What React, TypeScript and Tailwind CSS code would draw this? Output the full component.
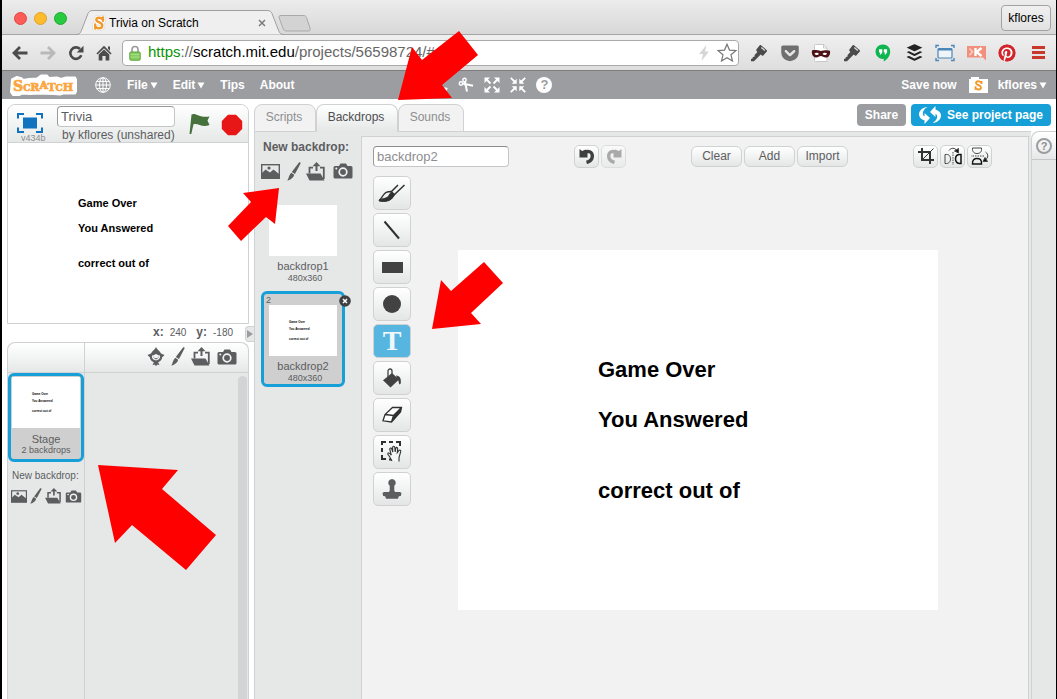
import React from 'react';
import { FaBuffer, FaGetPocket, FaPinterest } from 'react-icons/fa';

type IconProps = { className?: string };

/* ---------- browser icons ---------- */

const BackIcon = ({ className }: IconProps) => (
  <svg viewBox="0 0 16 14" className={className} aria-hidden="true">
    <path d="M8 1 2 7l6 6M2.500 7H15.500" fill="none" stroke="currentColor" strokeWidth="2.800" />
  </svg>
);

const ReloadIcon = () => (
  <svg viewBox="0 0 16 16" className="size-4" aria-hidden="true">
    <path d="M13.300 10.300A5.700 5.700 0 1 1 12 4" fill="none" stroke="#4b4b4b" strokeWidth="2.600" />
    <path d="M15.500 .7v6.800H8.700z" fill="#4b4b4b" />
  </svg>
);

const HomeIcon = () => (
  <svg viewBox="0 0 16 16" className="size-4" aria-hidden="true">
    <path d="M8 .8 15.600 8.400 14.500 9.500 8 3.200 1.500 9.500.4 8.400zM12 1.500h2v4.200l-2-2z" fill="#4b4b4b" />
    <path d="M8 4.500 13.300 9.500V15.500H9.600V11H6.400v4.500H2.700V9.500z" fill="#4b4b4b" />
  </svg>
);

const LockIcon = () => (
  <svg viewBox="0 0 12 16" className="h-4 w-3 shrink-0" aria-hidden="true">
    <path d="M3 8V4.500a3 3 0 0 1 6 0V8" fill="none" stroke="#9a9a9a" strokeWidth="1.600" />
    <rect x=".8" y="7" width="10.400" height="8.200" rx="1" fill="#86cc60" stroke="#5ba33b" />
    <path d="M1.500 9.500h9M1.500 12h9" stroke="#a6e085" />
  </svg>
);

const KeyIcon = () => (
  <svg viewBox="0 0 18 18" className="size-[18px]" aria-hidden="true">
    <path d="M11 1.200 16.800 6.200a1 1 0 0 1 0 1.300l-3.500 4a1 1 0 0 1-1.300.1L10.700 10.600 4 17.200H1V15l1.600-.4.200-1.700 1.700-.2.100-1.600 2.800-3.200L6.400 6.700a1 1 0 0 1 0-1.300l3.300-4.100a1 1 0 0 1 1.300-.1z" fill="#4a4a4a" />
    <path d="m11.300 3.400 3.500 3" stroke="#e0e0e0" strokeWidth="1.300" />
  </svg>
);

const MaskIcon = () => (
  <svg viewBox="0 0 20 18" className="h-[18px] w-5" aria-hidden="true">
    <path d="M4.500.5h8l3.500 3.500v13.500H4.500a1 1 0 0 1-1-1v-15a1 1 0 0 1 1-1z" fill="#fff" stroke="#c8c8c8" />
    <path d="M12.500.5V4H16" fill="none" stroke="#c8c8c8" />
    <path d="M1 6.500c3-1 6 0 8.500.4C12 6.500 16 5.500 19 6.700 19.500 10.500 18 13.500 15 13.500c-2.500 0-3.500-1.500-5.200-1.500S7 13.800 4.800 13.500C1.800 13 .3 10 1 6.500z" fill="#4d1218" />
    <path d="M3.500 9.800c1-1.500 3.500-1.300 4.500.3-1.200 1.400-3.500 1.400-4.500-.3zM11.500 10.100c1-1.600 3.500-1.800 4.600-.3-1 1.700-3.400 1.700-4.600.3z" fill="#fff" />
  </svg>
);

const HangoutsIcon = () => (
  <svg viewBox="0 0 16 18" className="h-[18px] w-4" aria-hidden="true">
    <path d="M8 .5a7 7 0 0 1 7.200 7.200C15.200 12 12 15.500 8.800 17.500v-2.700A7.200 7.200 0 1 1 8 .5z" fill="#0fb54e" />
    <path d="M4 5.200h3.300v3.400L5.800 10.500H4.600L5.300 8.600H4zM8.800 5.200h3.300v3.400l-1.500 1.900H9.400l.7-1.900H8.800z" fill="#fff" />
  </svg>
);

const CaptureIcon = () => (
  <svg viewBox="0 0 20 18" className="h-[18px] w-5" aria-hidden="true">
    <path d="M1 4V1.500h3M16 1.500h3V4M19 14v2.500h-3M4 16.500H1V14" fill="none" stroke="#4a86b8" strokeWidth="1.400" />
    <rect x="3" y="4.500" width="14" height="9.500" rx="1" fill="#eef4f8" stroke="#4a86b8" strokeWidth="1.200" />
    <path d="M3 5.500h14" stroke="#4a86b8" strokeWidth="2" />
  </svg>
);

const KloutIcon = () => (
  <svg viewBox="0 0 19 16" className="h-4 w-[19px]" aria-hidden="true">
    <path d="M0 1h19v14.500L16 12.500H0z" fill="#f1907c" />
    <path d="M8.500 3v8M14.500 3 9.500 7l5 4" fill="none" stroke="#fff" strokeWidth="2.400" />
    <path d="m2.500 3.500 3 3.300-3 3.400" fill="none" stroke="#fbd0c6" strokeWidth="1.600" />
  </svg>
);

/* ---------- editor icons ---------- */

const GlobeIcon = () => (
  <svg viewBox="0 0 16 16" className="size-4" fill="none" stroke="#fff" aria-hidden="true">
    <circle cx="8" cy="8" r="7.300" />
    <ellipse cx="8" cy="8" rx="3.500" ry="7.300" />
    <path d="M8 .7v14.600M.7 8h14.600M1.700 4.400h12.600M1.700 11.600h12.600" />
  </svg>
);

const Wordmark = () => (
  <svg viewBox="0 0 68 24" className="h-6 w-[68px]" role="img" aria-label="Scratch">
    <path d="M3 6.500 8 4l5 1.500 1 1.500 6-1 8-.5 4-3h6l2 2.500 8-.5 4 1.500 5-1.500h9l1.500 3-.5 4 .5 6-1.500 3H54l-3 1-6-.5-16-.5-8 .5-8-.5-3 1.500H4L2 19z" fill="#fff" stroke="#fff" strokeWidth="2" strokeLinejoin="round" />
    <text x="4" y="18" fontFamily="'DejaVu Serif', serif" fontWeight="700" fontSize="11" fill="#f9a540" stroke="#f9a540" strokeWidth="0.7">
      <tspan fontSize="14">S</tspan>
      <tspan fontSize="9">C</tspan>
      <tspan>R</tspan>
      <tspan dy="-2">A</tspan>
      <tspan dy="2">T</tspan>
      <tspan fontSize="9">C</tspan>
      <tspan>H</tspan>
    </text>
  </svg>
);

const SLetter = ({ className }: IconProps) => (
  <svg viewBox="0 0 14 16" className={className} aria-hidden="true">
    <g fill="none" strokeLinecap="round">
      <path d="M11 3v3M11 4.800C10 2.500 4.500 1.800 4.300 4.700 4.200 7.500 10.500 7 10.300 10.800 10 14.300 4 13.800 3.300 11M3.200 9.500v4" stroke="#d6d6d6" strokeWidth="5.600" />
      <path d="M11 3v3M11 4.800C10 2.500 4.500 1.800 4.300 4.700 4.200 7.500 10.500 7 10.300 10.800 10 14.300 4 13.800 3.300 11M3.200 9.500v4" stroke="#fff" strokeWidth="4.600" />
      <path d="M11 2.500v3.300M11 4.800C10 2.500 4.500 1.800 4.300 4.700 4.200 7.500 10.500 7 10.300 10.800 10 14.300 4 13.800 3.300 11M3.200 9.500v4" stroke="#f29a2e" strokeWidth="2.400" />
    </g>
  </svg>
);

const FolderIcon = () => (
  <svg viewBox="0 0 19 18" className="h-[18px] w-[19px]" aria-hidden="true">
    <path d="M0 3h2V1h8v2h9v14H0z" fill="#fff" />
    <path d="M12.500 5v3M12.500 7C11.500 5 7 4.500 7 7c0 2.300 5 1.700 5 4.500 0 2.700-4.500 2.500-5.500.3M6.500 10.300v3.500" fill="none" stroke="#f29a2e" strokeWidth="1.900" />
  </svg>
);

const ScissorsIcon = () => (
  <svg viewBox="0 0 16 16" className="size-4" fill="none" stroke="#fff" aria-hidden="true">
    <circle cx="6.500" cy="3" r="1.700" strokeWidth="1.400" />
    <circle cx="3" cy="6.500" r="1.700" strokeWidth="1.400" />
    <path d="M7 4.600 9 14.500M4.700 6.600 15 8.700M6.500 7.500 9 8" strokeWidth="2" />
  </svg>
);

const GrowIcon = () => (
  <svg viewBox="0 0 16 16" className="size-4" aria-hidden="true">
    <path d="m2 2 4.500 4.500M14 2 9.500 6.500M2 14l4.500-4.500M14 14 9.500 9.500" stroke="#fff" strokeWidth="1.800" />
    <path d="M.5.500H6L.500 6zM15.500.500V6L10 .5zM.5 15.500V10L6 15.500zM15.500 15.500H10L15.500 10z" fill="#fff" />
  </svg>
);

const ShrinkIcon = () => (
  <svg viewBox="0 0 16 16" className="size-4" aria-hidden="true">
    <path d="M.800.800 5 5M15.200.800 11 5M.8 15.200 5 11M15.200 15.200 11 11" stroke="#fff" strokeWidth="1.800" />
    <path d="M6.700 6.700H1.700L6.700 1.700zM9.300 6.700V1.700L14.300 6.700zM6.700 9.300v5L1.700 9.300zM9.300 9.300h5L9.300 14.300z" fill="#fff" />
  </svg>
);

const StampIcon = ({ className }: IconProps) => (
  <svg viewBox="0 0 20 20" className={className} fill="currentColor" aria-hidden="true">
    <path d="M10 0a3.800 3.800 0 0 1 2.300 6.800V12l1 1H18l1.500 1-.7 3-2 .2-.8 2.600H4l-.8-2.600-2-.2-.7-3L2 13h4.700l1-1V6.800A3.800 3.800 0 0 1 10 0z" />
  </svg>
);

const SwirlIcon = () => (
  <svg viewBox="0 0 24 20" className="h-5 w-6" fill="#fff" aria-hidden="true">
    <path d="M9.500 2C3 2.500-1 8 2 12.500c1 1.500 2.800 2.500 4.500 2.800V19l5.500-6-5.500-5v3.300C3.500 10 4.500 4.500 9.500 2z" />
    <path d="M14.500 18C21 17.500 25 12 22 7.500 21 6 19.200 5 17.500 4.700V1L12 7l5.500 5V8.700C20.500 10 19.500 15.500 14.500 18z" />
  </svg>
);

const PictureIcon = ({ className }: IconProps) => (
  <svg viewBox="0 0 19 15" className={className} aria-hidden="true">
    <rect x=".7" y=".7" width="17.600" height="13.600" fill="none" stroke="#5c5d5f" strokeWidth="1.400" />
    <path d="M1 14V9l3.500-3.500L9 8.500l3.500-3L18 10v4z" fill="#5c5d5f" />
    <circle cx="8" cy="4" r="1.600" fill="#5c5d5f" />
  </svg>
);

const BrushIcon = ({ className }: IconProps) => (
  <svg viewBox="0 0 14 19" className={className} fill="#5c5d5f" aria-hidden="true">
    <path d="M12 .4c1-.6 2 .2 1.500 1.200L8 12 4.800 10z" />
    <path d="M4.300 10.800 7.200 12.700C6.700 15.500 4 17.500.3 18.700 1.800 16.500 2 12.500 4.300 10.800z" />
  </svg>
);

const UploadIcon = ({ className }: IconProps) => (
  <svg viewBox="0 0 20 19" className={className} aria-hidden="true">
    <path d="M0 11.500h14.500L18.500 18.500H3.500z" fill="#5c5d5f" />
    <path d="M3.500 11.500V5.700H7M14 5.700h3.800V17" fill="none" stroke="#5c5d5f" strokeWidth="1.800" />
    <path d="M10.500 9V3" stroke="#5c5d5f" strokeWidth="2" />
    <path d="m10.500 0 4 4.300h-8z" fill="#5c5d5f" />
  </svg>
);

const CameraIcon = ({ className }: IconProps) => (
  <svg viewBox="0 0 20 16" className={className} aria-hidden="true">
    <path d="M2 3h4l1.500-2.500h5.500L14.500 3H18a1.500 1.500 0 0 1 1.500 1.500v9.500a1.500 1.500 0 0 1-1.500 1.500H2A1.500 1.500 0 0 1 .5 14V4.500A1.500 1.500 0 0 1 2 3z" fill="#5c5d5f" />
    <circle cx="10" cy="9" r="3.800" fill="none" stroke="#f0f1f1" strokeWidth="1.700" />
    <circle cx="3.300" cy="5.600" r="1" fill="#f0f1f1" />
  </svg>
);

const SpriteIcon = () => (
  <svg viewBox="0 0 18 19" className="h-[19px] w-[18px]" aria-hidden="true">
    <path d="M9 0c.8 2.500 4 4 5 6.500L17.500 8 15 10.500c0 2.500-2 4-3.800 4.800l1.300 3-2-.8L9 19l-1.500-1.500-2 .8 1.300-3C5 14.500 3 13 3 10.500L.5 8 4 6.500C5 4 8.200 2.500 9 0z" fill="#5c5d5f" />
    <path d="M5 8.500c2.500 0 3-1.500 4-1.500s1.500 1.500 4 1.500c.5 3-1.500 4.800-4 4.800S4.500 11.500 5 8.500z" fill="#f3f4f4" />
    <path d="M6.800 9.800v.7M11.200 9.800v.7M7.500 11.700h3" stroke="#5c5d5f" />
  </svg>
);

const CanvasBrushIcon = () => (
  <svg viewBox="0 0 28 20" className="h-5 w-7" fill="none" stroke="#303030" aria-hidden="true">
    <path d="M20 2 13 9M26.500 2 16.500 11.500" strokeWidth="1.500" />
    <path d="M13 8.500c-3.500 0-6 .5-7.500 3.500L1.500 17.500c5 .7 10 .8 12.500-2.800l2.500-3.200z" strokeWidth="1.300" />
    <path d="M1.500 18c5 .7 10 .5 12.800-3l2.200-3.500-3-2.500-2.500 3c0 2.300-4.500 3.800-9.500 4.500z" fill="#303030" />
  </svg>
);

const BucketIcon = () => (
  <svg viewBox="0 0 20 20" className="size-5" aria-hidden="true">
    <path d="M10 5 17 11.500 8.500 19.500 1 12.300z" fill="#424242" />
    <path d="M6 9V3a2 2 0 0 1 4 0v4" fill="none" stroke="#424242" strokeWidth="1.300" />
    <path d="M14 7.500c4 .2 5.300 3 4.800 8l-1.600 1c-.3-2-.5-4-2-5.500z" fill="#424242" />
  </svg>
);

const EraserIcon = () => (
  <svg viewBox="0 0 22 18" className="h-[18px] w-[22px]" aria-hidden="true">
    <path d="M11.500 1.500h9l-1 4.500L10.500 16 2 14.800 4 8.500z" fill="#fff" />
    <path d="M20.500 1.500 12.500 9.500l-2 6.500L19.500 6z" fill="#303030" />
    <path d="M11.500 1.500h9l-1 4.500L10.500 16 2 14.800 4 8.500zM4 8.500l8.500 1L20.500 1.500M12.500 9.500 10.500 16" fill="none" stroke="#303030" strokeWidth="1.300" />
  </svg>
);

const SelectIcon = () => (
  <svg viewBox="0 0 24 24" className="size-6" fill="none" stroke="#303030" aria-hidden="true">
    <path d="M2 5V2h4M9 2h4M16 2h4v4M2 8v4M2 15v4h4M9 19.500h3" strokeWidth="2" />
    <path d="m12 21-2.500-4.500L8 14.500c-.7-1.500 1-2 1.800-1l1.500 1.700-1.500-5.700c-.3-1.600 1.600-2 2-.5l1 3-.2-4.500c0-1.600 2-1.600 2.200 0l.4 4.500.6-3.600c.3-1.500 2-1.200 1.900.3l-.4 4 1.500-2c.9-1.300 2.400-.5 1.900.9L19 17.500V21.500" fill="#f4f5f5" strokeWidth="1.100" />
  </svg>
);

const UndoIcon = ({ className }: IconProps) => (
  <svg viewBox="0 0 16 16" className={className} aria-hidden="true">
    <path d="M4 5.500 6 4.500C9 2.500 13 3.500 13.300 7.500 13.500 11 11 13.500 7.500 14.500" fill="none" stroke="currentColor" strokeWidth="3.400" />
    <path d="M.5 1 3 3 7 1.500 8.500 5.500V9.500H.5z" fill="currentColor" />
  </svg>
);

const CropIcon = () => (
  <svg viewBox="0 0 16 16" className="size-4" fill="none" stroke="#333" aria-hidden="true">
    <path d="M4 0v12h12M0 4h12v12" strokeWidth="2" />
    <path d="m4 12 11.500-11.500" />
  </svg>
);

const FlipIcon = ({ className }: IconProps) => (
  <svg viewBox="0 0 18 18" className={className} fill="none" stroke="#444" aria-hidden="true">
    <path d="M9 5v13" strokeDasharray="1.500 1" />
    <path d="M1 7.500c4.500-.5 5.500 2 5.500 4.500S5 17 1 16.500z" />
    <path d="M17 7.500c-4.500-.5-5.500 2-5.500 4.500s1.500 5 5.500 4.500z" stroke="#111" strokeWidth="1.500" />
    <path d="M5 3.500C7 .5 11 .5 12.500 3.500" />
    <path d="M10.500 4 14.500 1.500 14.500 6z" fill="#111" />
  </svg>
);

/* ---------- shared pieces ---------- */

const MENU_ITEM = 'flex items-center gap-[2px] font-bold text-white';
const RAISED = 'flex items-center justify-center border border-[#cfd1d2] bg-linear-to-b from-white to-[#e4e6e6]';

const Caret = () => (
  <svg viewBox="0 0 8 7" className="h-[7px] w-2" aria-hidden="true">
    <path d="M.5.500h7L4 6.500z" fill="#fff" />
  </svg>
);

const Thumbnail = ({ blank = false }: { blank?: boolean }) => (
  <span className="block h-[51px] w-[68px] bg-white pt-[15px] pl-5 text-left text-[3px] leading-[4px] font-bold text-black">
    {!blank && (
      <>
        <span className="block">Game Over</span>
        <span className="mt-[3px] block">You Answered</span>
        <span className="mt-[6px] block">correct out of</span>
      </>
    )}
  </span>
);

const paintTools: { name: string; icon: React.ReactNode }[] = [
  { name: 'Brush', icon: <CanvasBrushIcon /> },
  {
    name: 'Line',
    icon: (
      <svg viewBox="0 0 18 20" className="h-5 w-[18px]" aria-hidden="true">
        <path d="m1.500 1.500 14.500 17" stroke="#303030" strokeWidth="2" />
      </svg>
    ),
  },
  { name: 'Rectangle', icon: <span className="h-[11px] w-[21px] bg-[#424242]" /> },
  { name: 'Ellipse', icon: <span className="size-[18px] rounded-full bg-[#424242]" /> },
  {
    name: 'Text',
    icon: <span className="font-['Liberation_Serif',serif] text-[28px] leading-7 font-bold text-[#f0f7fb]">T</span>,
  },
  { name: 'Fill', icon: <BucketIcon /> },
  { name: 'Eraser', icon: <EraserIcon /> },
  { name: 'Select', icon: <SelectIcon /> },
  { name: 'Stamp', icon: <StampIcon className="size-5 text-[#5c5d5f]" /> },
];

/* ---------- browser chrome ---------- */

const TabStrip = () => (
  <div className="flex h-[34px] items-start bg-linear-to-b from-[#ececec] to-[#d8d8d8] pl-3">
    <div className="flex gap-[7px] pt-3">
      <button aria-label="Close" className="size-[13px] rounded-full border border-[#e2463f] bg-[#fc5b57]" />
      <button aria-label="Minimize" className="size-[13px] rounded-full border border-[#e0a02a] bg-[#fdbc2e]" />
      <button aria-label="Zoom" className="size-[13px] rounded-full border border-[#1fa930] bg-[#28ca40]" />
    </div>
    <div className="relative z-10 mt-[10px] ml-[9px] flex h-[25px] w-[208px] items-center">
      <svg viewBox="0 0 208 25" className="absolute inset-0" aria-hidden="true">
        <path d="M0 24.500c3 0 4-1 5-3L12 3.500C13 1.500 14 .5 17 .5h174c3 0 4 1 5 3l7 18c1 2 2 3 5 3" fill="#efefef" stroke="#9f9f9f" />
      </svg>
      <SLetter className="relative ml-4 h-4 w-[14px]" />
      <span className="relative ml-[3px] text-xs text-black">Trivia on Scratch</span>
      <button aria-label="Close tab" className="relative mr-[18px] ml-auto">
        <svg viewBox="0 0 8 8" className="size-2" aria-hidden="true">
          <path d="m1 1 6 6M7 1 1 7" stroke="#7b7b7b" strokeWidth="1.500" />
        </svg>
      </button>
    </div>
    <button aria-label="New tab" className="mt-[15px] -ml-[6px]">
      <svg viewBox="0 0 33 17" className="h-[17px] w-[33px]" aria-hidden="true">
        <path d="M3 .5h22c2 0 3 .5 3.500 2L32 13c.6 2 0 3-2 3H9c-2 0-3-.5-3.700-2L1.200 3C.6 1.500 1 .5 3 .5z" fill="#d3d3d3" stroke="#a9a9a9" />
      </svg>
    </button>
    <button className="mt-[5px] mr-[5px] ml-auto h-[26px] w-[50px] rounded border border-[#a3a3a3] bg-linear-to-b from-[#f0f0f0] to-[#e2e2e2] text-xs text-black">
      kflores
    </button>
  </div>
);

const AddressRow = () => (
  <div className="flex h-[37px] items-center border-t border-b border-t-[#a5a5a5] border-b-[#7d7d7d] bg-linear-to-b from-[#efefef] to-[#dedede] pr-[7px] pl-[10px]">
    <nav className="flex items-center gap-3">
      <button aria-label="Back"><BackIcon className="h-[14px] w-4 text-[#4b4b4b]" /></button>
      <button aria-label="Forward" className="rotate-180"><BackIcon className="h-[14px] w-4 text-[#b9b9b9]" /></button>
      <button aria-label="Reload"><ReloadIcon /></button>
      <button aria-label="Home"><HomeIcon /></button>
    </nav>
    <div className="mr-[9px] ml-[10px] flex h-[26px] flex-1 items-center rounded border border-[#a9a9a9] bg-white pr-px pl-[6px]">
      <LockIcon />
      <span className="ml-[7px] flex-1 text-[15px] whitespace-nowrap text-[#666]">
        <span className="text-[#0a9404]">https</span>://<span className="text-black">scratch.mit.edu</span>/projects/56598724/#e
      </span>
      <svg viewBox="0 0 10 16" className="h-4 w-[10px]" aria-hidden="true">
        <path d="M7.500 0 0 9h4l-1.500 7L10 6.500H6z" fill="#d6d6d6" />
      </svg>
      <button aria-label="Bookmark" className="ml-2">
        <svg viewBox="0 0 20 19" className="h-[19px] w-5" aria-hidden="true">
          <path d="m10 1.200 2.500 5.900 6.400.5-4.900 4.200 1.500 6.200L10 14.700 4.500 18 6 11.800 1.100 7.600l6.400-.5z" fill="#fff" stroke="#777" strokeWidth="1.200" />
        </svg>
      </button>
    </div>
    <div className="flex gap-[9px]">
      {[
        { name: 'Password', icon: <KeyIcon /> },
        { name: 'Pocket', icon: <FaGetPocket className="size-5 text-[#6f6f6f]" /> },
        { name: 'Mask', icon: <MaskIcon /> },
        { name: 'Key', icon: <KeyIcon /> },
        { name: 'Hangouts', icon: <HangoutsIcon /> },
        { name: 'Buffer', icon: <FaBuffer className="size-[19px] text-[#222]" /> },
        { name: 'Capture', icon: <CaptureIcon /> },
        { name: 'Klout', icon: <KloutIcon /> },
        { name: 'Pinterest', icon: <FaPinterest className="size-[18px] rounded-full bg-white text-[#d2252b]" /> },
      ].map((item) => (
        <button key={item.name} aria-label={item.name} className="flex w-[22px] items-center justify-center">
          {item.icon}
        </button>
      ))}
      <button aria-label="Menu" className="flex w-[22px] flex-col items-center justify-center gap-[2px]">
        <span className="h-[3px] w-[13px] bg-[#c9392b]" />
        <span className="h-[3px] w-[13px] bg-[#c9392b]" />
        <span className="h-[3px] w-[13px] bg-[#c9392b]" />
      </button>
    </div>
  </div>
);

/* ---------- editor ---------- */

const MenuBar = () => (
  <header className="flex h-7 items-center bg-[#9c9da1] pr-[9px] pl-[7px] text-xs">
    <Wordmark />
    <button aria-label="Language" className="ml-[18px]"><GlobeIcon /></button>
    <nav className="ml-4 flex gap-[15px]">
      <button className={MENU_ITEM}>File<Caret /></button>
      <button className={MENU_ITEM}>Edit<Caret /></button>
      <a href="#tips" className={MENU_ITEM}>Tips</a>
      <a href="#about" className={MENU_ITEM}>About</a>
    </nav>
    <div className="ml-[138px] flex items-center gap-[10px]">
      <button aria-label="Duplicate"><StampIcon className="size-4 text-white" /></button>
      <button aria-label="Delete"><ScissorsIcon /></button>
      <button aria-label="Grow"><GrowIcon /></button>
      <button aria-label="Shrink"><ShrinkIcon /></button>
      <button aria-label="Block help" className="flex size-4 items-center justify-center rounded-full bg-white text-[13px] leading-4 font-bold text-[#9c9da1]">?</button>
    </div>
    <div className="ml-auto flex items-center">
      <button className={MENU_ITEM}>Save now</button>
      <button aria-label="My stuff" className="mr-[10px] ml-3 flex"><FolderIcon /></button>
      <button className={MENU_ITEM}>kflores<Caret /></button>
    </div>
  </header>
);

const StagePanel = () => (
  <section className="mt-[5px] rounded-t-lg border border-[#d0d1d2]">
    <div className="flex h-[38px] items-start rounded-t-lg border-b border-[#d0d1d2] bg-linear-to-b from-white to-[#e6e8e8] pl-[9px]">
      <div className="mt-2 flex w-[30px] flex-col">
        <button aria-label="Full screen">
          <svg viewBox="0 0 26 20" className="h-5 w-[26px]" aria-hidden="true">
            <path d="M1 5.500V1h6M19 1h6v4.500M25 14.500V19h-6M7 19H1v-4.500" fill="none" stroke="#1173c0" strokeWidth="2" />
            <rect x="6" y="4.500" width="14" height="11" fill="#1173c0" />
          </svg>
        </button>
        <span className="pl-1 text-[9px] leading-[10px] text-[#8c8d90]">v434b</span>
      </div>
      <div className="mt-px ml-[10px]">
        <input
          aria-label="Project title"
          defaultValue="Trivia"
          className="block h-[21px] w-[118px] rounded border border-[#c5c6c8] border-t-[#9a9b9d] border-l-[#9a9b9d] bg-white px-[3px] text-[13px] text-[#5c5d5f]"
        />
        <p className="ml-[5px] text-xs leading-4 whitespace-nowrap text-[#5c5d5f]">by kflores (unshared)</p>
      </div>
      <button aria-label="Green flag" className="mt-2 ml-[14px]">
        <svg viewBox="0 0 21 22" className="h-[22px] w-[21px]" fill="#47713c" aria-hidden="true">
          <path d="M2.500 1.500c4-2.500 7.500 3.500 18 2l-2 4 2 4.500c-8 3-11.500-2.500-16-.7L2.300 21H.5z" />
        </svg>
      </button>
      <button aria-label="Stop" className="mt-[9px] ml-[11px]">
        <svg viewBox="0 0 22 22" className="size-[22px]" aria-hidden="true">
          <path d="M7 .8h8L21.200 7v8L15 21.200H7L.800 15V7z" fill="#e81717" />
        </svg>
      </button>
    </div>
    <div className="h-[180px] bg-white pt-[54px] pl-[70px] text-[11px] leading-3 font-bold text-black">
      <p>Game Over</p>
      <p className="mt-[13px]">You Answered</p>
      <p className="mt-[23px]">correct out of</p>
    </div>
  </section>
);

const SpritePanel = () => (
  <section className="flex flex-1 flex-col rounded-t-lg border border-b-0 border-[#d0d1d2] bg-[#e6e8e8]">
    <div className="flex h-[30px] rounded-t-lg border-b border-[#d0d1d2] bg-linear-to-b from-white to-[#e6e8e8]">
      <div className="w-[77px] border-r border-[#d0d1d2]" />
      <div className="flex flex-1 items-center justify-end gap-[6px] pr-[11px] pb-[3px]">
        <button aria-label="Choose sprite"><SpriteIcon /></button>
        <button aria-label="Paint sprite"><BrushIcon className="h-[19px] w-[14px]" /></button>
        <button aria-label="Upload sprite"><UploadIcon className="h-[19px] w-5" /></button>
        <button aria-label="Sprite from camera" className="pt-px"><CameraIcon className="h-4 w-5" /></button>
      </div>
    </div>
    <div className="flex flex-1">
      <div className="w-[77px] border-r border-[#d0d1d2]">
        <button className="flex h-[89px] w-[76px] flex-col items-center rounded-md border-[3px] border-[#179fd7] bg-[#cfcfcf] pt-px text-[#5c5d5f]">
          <Thumbnail />
          <span className="mt-[5px] text-[11px] leading-3">Stage</span>
          <span className="text-[9px] leading-[11px]">2 backdrops</span>
        </button>
        <p className="mt-[7px] pl-1 text-[10px] leading-[14px] whitespace-nowrap text-[#5c5d5f]">New backdrop:</p>
        <div className="mt-[5px] flex items-center gap-[3px] pl-[3px]">
          <button aria-label="Backdrop from library"><PictureIcon className="h-[13px] w-4" /></button>
          <button aria-label="Paint backdrop"><BrushIcon className="h-4 w-3" /></button>
          <button aria-label="Upload backdrop"><UploadIcon className="h-4 w-[17px]" /></button>
          <button aria-label="Backdrop from camera"><CameraIcon className="h-[13px] w-[17px]" /></button>
        </div>
      </div>
      <div className="mt-[3px] mr-px ml-auto w-[9px] rounded-t-full bg-[#d3d4d6]" />
    </div>
  </section>
);

const TABS = [
  { label: 'Scripts', style: 'w-[62px] bg-[#f2f2f2] text-[#8d8e91]' },
  { label: 'Backdrops', style: 'w-[82px] bg-linear-to-b from-white to-[#e6e8e8] border-b-[#e6e8e8] text-[#4d4e50]' },
  { label: 'Sounds', style: 'w-[66px] bg-[#f2f2f2] text-[#8d8e91]' },
];

const BackdropList = () => (
  <aside className="w-[106px] pt-2 pl-[6px] text-[#5c5d5f]">
    <h2 className="pl-[2px] text-xs leading-[14px] font-bold">New backdrop:</h2>
    <div className="mt-[7px] flex h-5 items-center">
      <button aria-label="Choose backdrop from library"><PictureIcon className="h-[15px] w-[19px]" /></button>
      <button aria-label="Paint new backdrop" className="ml-[7px]"><BrushIcon className="h-[19px] w-[14px]" /></button>
      <button aria-label="Upload backdrop from file" className="ml-[5px]"><UploadIcon className="h-[19px] w-5" /></button>
      <button aria-label="New backdrop from camera" className="ml-[7px]"><CameraIcon className="h-4 w-5" /></button>
    </div>
    <div className="mt-[10px] flex w-[84px] flex-col gap-1">
      <button className="flex h-24 flex-col items-center border-[3px] border-transparent pt-[11px]">
        <Thumbnail blank />
        <span className="mt-[3px] text-[11px] leading-[14px]">backdrop1</span>
        <span className="pl-1 text-[9px] leading-[11px]">480x360</span>
      </button>
      <div className="relative">
        <button className="flex h-24 w-full flex-col items-center rounded-md border-[3px] border-[#179fd7] bg-[#cfcfcf]">
          <span className="h-[11px] self-start pl-[2px] text-[9px] leading-[13px]">2</span>
          <Thumbnail />
          <span className="mt-[3px] text-[11px] leading-[14px]">backdrop2</span>
          <span className="pl-1 text-[9px] leading-[11px]">480x360</span>
        </button>
        <button aria-label="Delete backdrop2" className="absolute top-1 -right-[6px]">
          <svg viewBox="0 0 12 12" className="size-3" aria-hidden="true">
            <circle cx="6" cy="6" r="5.800" fill="#3f4042" />
            <path d="m4 4 4 4M8 4 4 8" stroke="#fff" strokeWidth="1.500" />
          </svg>
        </button>
      </div>
    </div>
  </aside>
);

const PaintEditor = () => (
  <main className="mt-[4px] mr-[2px] flex-1 border border-b-0 border-[#d0d1d2] bg-[#f2f2f2] pt-[7px] pl-[11px] text-[#5c5d5f]">
    <div className="flex h-6 items-center">
      <input
        aria-label="Costume name"
        defaultValue="backdrop2"
        className="h-[21px] w-[136px] rounded border border-[#c5c6c8] border-t-[#8a8b8d] border-l-[#9a9b9d] bg-white px-[3px] text-[13px] text-[#8d8e91]"
      />
      <div className="ml-[65px] flex gap-[2px]">
        <button aria-label="Undo" className={`${RAISED} h-[23px] w-[25px] rounded-[5px]`}><UndoIcon className="size-4 text-[#3f3f3f]" /></button>
        <button aria-label="Redo" className={`${RAISED} h-[23px] w-[25px] rounded-[5px] opacity-60`}><UndoIcon className="size-4 -scale-x-100 text-[#7a7a7a]" /></button>
      </div>
      <div className="ml-[65px] flex gap-[2px]">
        {['Clear', 'Add', 'Import'].map((label) => (
          <button key={label} className={`${RAISED} h-[21px] w-[51px] rounded-md text-xs`}>{label}</button>
        ))}
      </div>
      <div className="mr-9 ml-auto flex gap-[2px]">
        <button aria-label="Crop" className={`${RAISED} h-[23px] w-[25px] rounded-[5px]`}><CropIcon /></button>
        <button aria-label="Flip left-right" className={`${RAISED} h-[23px] w-[25px] rounded-[5px]`}><FlipIcon className="size-[18px]" /></button>
        <button aria-label="Flip up-down" className={`${RAISED} h-[23px] w-[25px] rounded-[5px]`}><FlipIcon className="size-[18px] rotate-90" /></button>
      </div>
    </div>
    <div className="mt-2 flex items-start">
      <div className="flex flex-col gap-[3px]">
        {paintTools.map((tool) => (
          <button
            key={tool.name}
            aria-label={tool.name}
            className={
              tool.name === 'Text'
                ? 'flex h-[34px] w-[38px] items-center justify-center rounded-[5px] border border-[#cfd1d2] bg-[#57b6df]'
                : `${RAISED} h-[34px] w-[38px] rounded-[5px]`
            }
          >
            {tool.icon}
          </button>
        ))}
      </div>
      <div className="mt-[74px] ml-[47px] h-[360px] w-[480px] bg-white pt-[108px] pl-[140px] text-[22px] leading-6 font-bold text-black">
        <p>Game Over</p>
        <p className="mt-[26px]">You Answered</p>
        <p className="mt-[47px]">correct out of</p>
      </div>
    </div>
  </main>
);

const ARROWS = [
  '398,100 412,47 422,60 459,31 478,55 442,85 452,98',
  '279,188 275,224 266,217 241,241 228,226 251,202 243,193',
  '432,329 441,280 451,291 484,262 503,283 471,313 481,324',
  '98,465 178,470 162,489 216,535 186,570 132,525 115,543',
];

export default function App() {
  return (
    <div className="relative flex min-h-screen flex-col overflow-hidden border-r border-l-2 border-black bg-white font-['Liberation_Sans',Arial,sans-serif]">
      <TabStrip />
      <AddressRow />
      <MenuBar />
      <div className="flex flex-1 gap-[5px] pl-[5px]">
        <div className="flex w-[242px] shrink-0 flex-col">
          <StagePanel />
          <div className="relative flex h-[18px] items-center justify-end pr-4 pb-[2px] text-[10px] text-[#5c5d5f]">
            <span className="text-xs font-bold">x:</span>
            <span className="ml-[6px]">240</span>
            <span className="ml-[10px] text-xs font-bold">y:</span>
            <span className="ml-[6px]">-180</span>
            <button aria-label="Collapse stage" className="absolute top-[2px] -right-[5px] flex h-4 w-[9px] items-center justify-center rounded-l border border-r-0 border-[#d0d1d2] bg-[#e6e8e8]">
              <svg viewBox="0 0 6 8" className="h-2 w-[6px]" aria-hidden="true">
                <path d="M0 0v8l6-4z" fill="#9c9da1" />
              </svg>
            </button>
          </div>
          <SpritePanel />
        </div>
        <div className="flex flex-1 flex-col">
          <div className="flex h-8 items-end">
            <div role="tablist" className="relative -mb-px flex h-7">
              {TABS.map((tab) => (
                <button
                  key={tab.label}
                  role="tab"
                  aria-selected={tab.label === 'Backdrops'}
                  className={`h-7 rounded-t-lg border border-[#d0d1d2] pr-[2px] pb-[2px] text-xs ${tab.style}`}
                >
                  {tab.label}
                </button>
              ))}
            </div>
            <div className="mr-[5px] mb-[5px] ml-auto flex gap-[5px] text-xs font-bold text-white">
              <button className="h-[22px] w-[49px] rounded bg-[#9c9da1]">Share</button>
              <a href="#project" className="flex h-[22px] w-[140px] items-center gap-[5px] rounded bg-[#179fd7] pl-[7px] whitespace-nowrap">
                <SwirlIcon />
                See project page
              </a>
            </div>
          </div>
          <div className="flex flex-1">
            <div className="flex flex-1 border-t border-l border-[#d0d1d2] bg-[#e6e8e8]">
              <BackdropList />
              <PaintEditor />
            </div>
            <div className="w-[25px] rounded-tl-lg border-t border-l border-[#d0d1d2] bg-[#e6e8e8]">
              <button aria-label="Help" className="flex h-7 w-full items-center justify-center rounded-tl-lg border-b border-[#c5c6c8] bg-linear-to-b from-white to-[#e6e8e8]">
                <span className="flex size-4 items-center justify-center rounded-full border-2 border-[#9c9da1] text-[11px] leading-3 font-bold text-[#8c8d90]">?</span>
              </button>
            </div>
          </div>
        </div>
      </div>
      <svg className="pointer-events-none absolute top-0 -left-[2px] h-[699px] w-[1057px]" viewBox="0 0 1057 699" fill="#ff0000" aria-hidden="true">
        {ARROWS.map((points) => (
          <polygon key={points} points={points} />
        ))}
      </svg>
    </div>
  );
}
